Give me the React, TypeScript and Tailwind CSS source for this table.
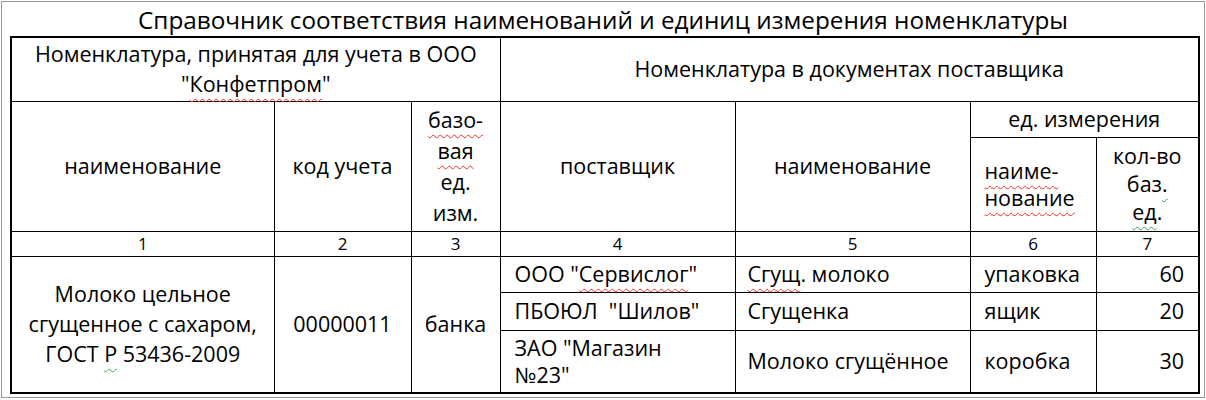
import React from "react";

const wavyRed =
  "underline decoration-wavy decoration-[#e8302a] decoration-1 underline-offset-[6px] [text-decoration-skip-ink:none]";
const wavyGreen =
  "underline decoration-wavy decoration-[#3aa04a] decoration-1 underline-offset-[6px] [text-decoration-skip-ink:none]";

const cell = "border border-black p-0 align-middle whitespace-nowrap";

export default function App() {
  return (
    <div className="w-[1206px] h-[400px] bg-white pl-px pt-px font-['Open_Sans',sans-serif] text-black">
      <div className="w-[1204px] h-[397px] border border-[#9a9a9a] flex flex-col">
        <div className="h-[34px] flex items-center justify-center text-[24.3px] leading-none pt-[2px]">
          Справочник соответствия наименований и единиц измерения номенклатуры
        </div>
        <div className="pl-[8px]">
          <table className="table-fixed border-collapse border-2 border-black text-[21.5px]">
            <colgroup>
              <col className="w-[263px]" />
              <col className="w-[137px]" />
              <col className="w-[89px]" />
              <col className="w-[235px]" />
              <col className="w-[235px]" />
              <col className="w-[126px]" />
              <col className="w-[103px]" />
            </colgroup>
            <tbody>
              <tr className="h-[64px]">
                <td colSpan={3} className={`${cell} text-center leading-[30px]`}>
                  Номенклатура, принятая для учета в ООО
                  <br />"<span className={wavyRed}>Конфетпром</span>"
                </td>
                <td colSpan={4} className={`${cell} text-center leading-[30px]`}>
                  Номенклатура в документах поставщика
                </td>
              </tr>
              <tr className="h-[36px]">
                <td rowSpan={2} className={`${cell} text-center`}>
                  наименование
                </td>
                <td rowSpan={2} className={`${cell} text-center`}>
                  код учета
                </td>
                <td rowSpan={2} className={`${cell} text-center leading-[31px]`}>
                  <span className={wavyRed}>базо-</span>
                  <br />
                  <span className={wavyRed}>вая</span>
                  <br />
                  ед.
                  <br />
                  изм.
                </td>
                <td rowSpan={2} className={`${cell} text-center`}>
                  поставщик
                </td>
                <td rowSpan={2} className={`${cell} text-center`}>
                  наименование
                </td>
                <td colSpan={2} className={`${cell} text-center leading-[30px]`}>
                  ед. измерения
                </td>
              </tr>
              <tr className="h-[94px]">
                <td className={`${cell} text-left pl-[14px] leading-[27px]`}>
                  <span className={wavyRed}>наиме-</span>
                  <br />
                  <span className={wavyRed}>нование</span>
                </td>
                <td className={`${cell} text-center leading-[28px]`}>
                  кол-во
                  <br />
                  баз<span className={wavyGreen}>.</span>
                  <br />
                  <span className={wavyGreen}>ед</span>.
                </td>
              </tr>
              <tr className="h-[25px] text-[17px] leading-[22px]">
                <td className={`${cell} text-center`}>1</td>
                <td className={`${cell} text-center`}>2</td>
                <td className={`${cell} text-center`}>3</td>
                <td className={`${cell} text-center`}>4</td>
                <td className={`${cell} text-center`}>5</td>
                <td className={`${cell} text-center`}>6</td>
                <td className={`${cell} text-center`}>7</td>
              </tr>
              <tr className="h-[36px]">
                <td rowSpan={3} className={`${cell} text-center leading-[30px]`}>
                  Молоко цельное
                  <br />
                  сгущенное с сахаром,
                  <br />
                  ГОСТ <span className={wavyGreen}>Р</span> 53436-2009
                </td>
                <td rowSpan={3} className={`${cell} text-center`}>
                  00000011
                </td>
                <td rowSpan={3} className={`${cell} text-center`}>
                  банка
                </td>
                <td className={`${cell} pl-[14px] leading-[30px]`}>
                  ООО "<span className={wavyRed}>Сервислог</span>"
                </td>
                <td className={`${cell} pl-[12px] leading-[30px]`}>
                  <span className={wavyRed}>Сгущ</span>. молоко
                </td>
                <td className={`${cell} pl-[14px] leading-[30px]`}>упаковка</td>
                <td className={`${cell} text-right pr-[14px] leading-[30px]`}>60</td>
              </tr>
              <tr className="h-[38px]">
                <td className={`${cell} pl-[14px] leading-[30px] whitespace-pre`}>
                  ПБОЮЛ  "Шилов"
                </td>
                <td className={`${cell} pl-[12px] leading-[30px]`}>Сгущенка</td>
                <td className={`${cell} pl-[14px] leading-[30px]`}>ящик</td>
                <td className={`${cell} text-right pr-[14px] leading-[30px]`}>20</td>
              </tr>
              <tr className="h-[63px]">
                <td className={`${cell} pl-[14px] leading-[27px]`}>
                  ЗАО "Магазин
                  <br />
                  №23"
                </td>
                <td className={`${cell} pl-[12px] leading-[30px]`}>Молоко сгущённое</td>
                <td className={`${cell} pl-[14px] leading-[30px]`}>коробка</td>
                <td className={`${cell} text-right pr-[14px] leading-[30px]`}>30</td>
              </tr>
            </tbody>
          </table>
        </div>
      </div>
    </div>
  );
}
